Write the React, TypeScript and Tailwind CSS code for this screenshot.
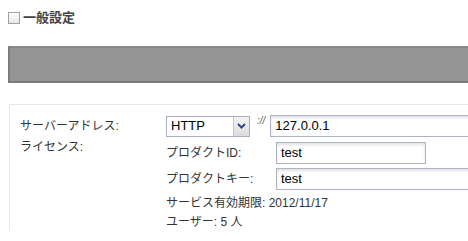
import React from 'react';

const jp = "font-['Liberation_Sans','Noto_Sans_CJK_JP',sans-serif]";

const TextBox = ({ value, className = '' }: { value: string; className?: string }) => (
  <div
    className={`h-[22px] border border-[#aeb3c6] bg-white shadow-[inset_0_2px_3px_rgba(0,0,0,0.12)] pl-[4px] flex items-center text-[13px] text-black ${className}`}
  >
    {value}
  </div>
);

export default function App() {
  return (
    <div className={`w-[468px] h-[241px] overflow-hidden bg-white text-[#333] ${jp}`}>
      {/* title */}
      <div className="flex items-center gap-[3px] pl-[8px] pt-[11px]">
        <span className="w-[12px] h-[12px] border border-[#a0a0a0] bg-gradient-to-b from-white to-[#e8e8e8]" />
        <span className="text-[13px] font-bold leading-[14px] text-[#444]">一般設定</span>
      </div>

      {/* gray bar */}
      <div className="mt-[21px] ml-[8px] h-[37px] border-[2px] border-r-0 border-[#7b7b7b] border-t-[#888] bg-[#959595]" />

      {/* panel */}
      <div className="mt-[21px] ml-[9px] border-t border-l border-[#e6e6e6] pl-[10px] pt-[10px] text-[12px] text-[#333]">
        <div className="grid grid-cols-[146px_1fr]">
          <div className="h-[22px] flex items-center">サーバーアドレス:</div>
          <div className="flex items-center">
            <div className="w-[84px] h-[21px] border border-[#a9afbf] bg-white flex">
              <span className="flex-1 flex items-center pl-[4px] text-[13px] text-black">HTTP</span>
              <span className="w-[16px] border-l border-[#c4c8d0] bg-gradient-to-b from-[#f4f4f4] to-[#dcdcdc] flex items-center justify-center">
                <svg width="9" height="6" viewBox="0 0 9 6">
                  <path d="M1 1 L4.5 4.5 L8 1" stroke="#2a4a8a" strokeWidth="2" fill="none" />
                </svg>
              </span>
            </div>
            <span className="ml-[7px] mr-[5px] self-start text-[10px] italic text-[#555] leading-[12px]">://</span>
            <TextBox value="127.0.0.1" className="w-[220px]" />
          </div>

          <div className="pt-[2px] leading-[16px]">ライセンス:</div>
          <div className="pt-[5px] flex flex-col gap-[4px]">
            <div className="flex items-center">
              <span className="w-[110px]">プロダクトID:</span>
              <TextBox value="test" className="w-[150px]" />
            </div>
            <div className="flex items-center">
              <span className="w-[110px]">プロダクトキー:</span>
              <TextBox value="test" className="w-[220px]" />
            </div>
            <div className="flex flex-col gap-[3px] pt-[1px]">
              <span className="leading-[16px]">サービス有効期限: 2012/11/17</span>
              <span className="leading-[16px]">ユーザー: 5 人</span>
            </div>
          </div>
        </div>
      </div>
    </div>
  );
}
